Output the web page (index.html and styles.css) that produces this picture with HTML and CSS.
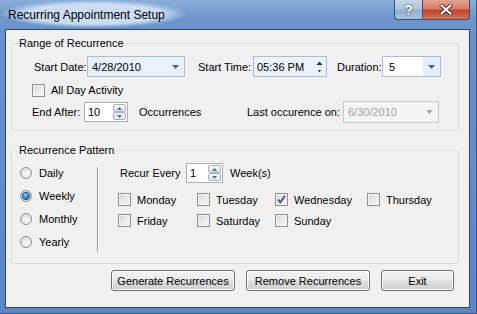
FILE: index.html
```html
<!DOCTYPE html>
<html lang="en">
<head>
    <meta charset="UTF-8">
    <title>Recurring Appointment Setup</title>
    <link rel="stylesheet" href="styles.css">
</head>
<body>

    <div class="window">
        <div class="titlebar">
            <span class="title">Recurring Appointment Setup</span>
            <div class="caption-btns">
                <span class="cap-btn help">?</span>
                <span class="cap-btn close">
                    <svg width="14" height="11" viewBox="0 0 14 11">
                        <path d="M2.5 1.5 L11.5 9.5 M11.5 1.5 L2.5 9.5" stroke="#5a2a22" stroke-width="4" stroke-linecap="round"/>
                        <path d="M2.5 1.5 L11.5 9.5 M11.5 1.5 L2.5 9.5" stroke="#fff" stroke-width="2.2" stroke-linecap="round"/>
                    </svg>
                </span>
            </div>
        </div>

        <div class="client">
            <fieldset class="group range">
                <legend>Range of Recurrence</legend>
                <div class="group-body range-body">
                    <div class="row row-start">
                        <span class="lbl lbl-date">Start Date:</span>
                        <div class="combo combo-date">
                            <span class="val">4/28/2010</span>
                            <span class="drop">
                                <svg width="7" height="4" viewBox="0 0 7 4"><path d="M0 0 H7 L3.5 4 Z" fill="#4d6185"/></svg>
                            </span>
                        </div>
                        <span class="lbl lbl-time">Start Time:</span>
                        <div class="timebox">
                            <span class="val">05:36 PM</span>
                            <span class="tspin">
                                <svg width="7" height="4" viewBox="0 0 7 4"><path d="M0.5 4 H6.5 L3.5 0.5 Z" fill="#1e2a4a"/></svg>
                                <svg width="5" height="3" viewBox="0 0 5 3"><path d="M1 0 H4 L2.5 2.5 Z" fill="#1e2a4a"/></svg>
                            </span>
                        </div>
                        <span class="lbl lbl-dur">Duration:</span>
                        <div class="combo combo-dur">
                            <span class="val">5</span>
                            <span class="drop drop-btn">
                                <svg width="7" height="4" viewBox="0 0 7 4"><path d="M0 0 H7 L3.5 4 Z" fill="#4d6185"/></svg>
                            </span>
                        </div>
                    </div>

                    <div class="row row-allday">
                        <span class="check"></span>
                        <span class="check-text">All Day Activity</span>
                    </div>

                    <div class="row row-end">
                        <span class="lbl lbl-end">End After:</span>
                        <div class="numeric num-end">
                            <span class="val">10</span>
                            <span class="spin">
                                <span class="spin-btn"><svg width="5" height="3" viewBox="0 0 5 3"><path d="M0 3 H5 L2.5 0 Z" fill="#4d6ca8"/></svg></span>
                                <span class="spin-btn"><svg width="5" height="3" viewBox="0 0 5 3"><path d="M0 0 H5 L2.5 3 Z" fill="#4d6ca8"/></svg></span>
                            </span>
                        </div>
                        <span class="lbl lbl-occ">Occurrences</span>
                        <span class="lbl lbl-last">Last occurence on:</span>
                        <div class="combo combo-off">
                            <span class="val">6/30/2010</span>
                            <span class="drop">
                                <svg width="7" height="4" viewBox="0 0 7 4"><path d="M0 0 H7 L3.5 4 Z" fill="#a8a8a8"/></svg>
                            </span>
                        </div>
                    </div>
                </div>
            </fieldset>

            <fieldset class="group pattern">
                <legend>Recurrence Pattern</legend>
                <div class="group-body pattern-body">
                    <div class="radio-col">
                        <div class="radio-row"><span class="radio"></span>Daily</div>
                        <div class="radio-row"><span class="radio on"></span>Weekly</div>
                        <div class="radio-row"><span class="radio"></span>Monthly</div>
                        <div class="radio-row"><span class="radio"></span>Yearly</div>
                    </div>
                    <div class="vsep"></div>
                    <div class="pattern-right">
                        <div class="recur-row">
                            <span class="lbl recur-lbl">Recur Every</span>
                            <div class="numeric num-recur">
                                <span class="val">1</span>
                                <span class="spin">
                                    <span class="spin-btn"><svg width="5" height="3" viewBox="0 0 5 3"><path d="M0 3 H5 L2.5 0 Z" fill="#4d6ca8"/></svg></span>
                                    <span class="spin-btn"><svg width="5" height="3" viewBox="0 0 5 3"><path d="M0 0 H5 L2.5 3 Z" fill="#4d6ca8"/></svg></span>
                                </span>
                            </div>
                            <span class="lbl weeks">Week(s)</span>
                        </div>
                        <div class="days-row first">
                            <div class="day d1"><span class="check"></span>Monday</div>
                            <div class="day d2"><span class="check"></span>Tuesday</div>
                            <div class="day d3">
                                <span class="check checked">
                                    <svg width="11" height="11" viewBox="0 0 11 11"><path d="M2 5.5 L4.3 8.3 L9 1.8" stroke="#4a5d8f" stroke-width="2" fill="none"/></svg>
                                </span>Wednesday
                            </div>
                            <div class="day d4"><span class="check"></span>Thursday</div>
                        </div>
                        <div class="days-row">
                            <div class="day d1"><span class="check"></span>Friday</div>
                            <div class="day d2"><span class="check"></span>Saturday</div>
                            <div class="day d3"><span class="check"></span>Sunday</div>
                        </div>
                    </div>
                </div>
            </fieldset>

            <div class="actions">
                <button class="btn btn-wide">Generate Recurrences</button>
                <button class="btn btn-wide">Remove Recurrences</button>
                <button class="btn btn-exit">Exit</button>
            </div>
        </div>
    </div>

</body>
</html>
```

FILE: styles.css
```css
body {
    margin: 0;
    background-color: #fff;
    font-family: 'Liberation Sans', Arial, sans-serif;
    font-size: 11px;
    color: #000;
}

/* window frame */
.window {
    width: 477px;
    height: 314px;
    box-sizing: border-box;
    padding: 0 6px 5px 5px;
    display: flex;
    flex-direction: column;
    background: linear-gradient(to bottom, #8aaedb 0px, #6e96cc 18px, #6690cc 40px, #5f8bca 200px, #5a86c6 100%);
    border-right: 1px solid #3d5a86;
    border-bottom: 1px solid #3d5a86;
}

.titlebar {
    height: 29px;
    display: flex;
    align-items: flex-start;
    flex: none;
}

.title {
    margin: 0 0 0 -5px;
    padding: 7px 22px 5px 8px;
    font-size: 12px;
    line-height: 16px;
    color: #000;
    background: radial-gradient(closest-side, rgba(208, 224, 244, 0.95) 72%, rgba(208, 224, 244, 0) 100%);
}

.caption-btns {
    margin-left: auto;
    display: flex;
    height: 20px;
}

.cap-btn {
    height: 20px;
    box-sizing: border-box;
    display: flex;
    justify-content: center;
    align-items: center;
    border: 1px solid #3e4f6c;
    border-top: none;
}

.help {
    width: 28px;
    border-right: none;
    border-radius: 0 0 0 4px;
    background: linear-gradient(to bottom, #c6d5e8 0%, #b0c4de 48%, #94acd0 52%, #a9c0de 100%);
    color: #fff;
    font-weight: bold;
    font-size: 14px;
    text-shadow: 0 0 2px #2c3a55, 0 0 1px #2c3a55;
}

.close {
    width: 48px;
    border-radius: 0 0 4px 0;
    background: linear-gradient(to bottom, #e4a294 0%, #d87c68 45%, #c4432b 55%, #d2745c 100%);
}

/* client area */
.client {
    flex: 1;
    box-sizing: border-box;
    border: 1px solid #33445f;
    background-color: #f0f0f0;
    padding: 7px 0 0 5px;
}

.group {
    margin: 0;
    padding: 0;
    width: 448px;
    box-sizing: border-box;
    border: 1px solid #d5dfe5;
    border-radius: 3px;
    min-width: 0;
}

.group legend {
    margin-left: 5px;
    padding: 0 2px;
    font-size: 11px;
    line-height: 13px;
}

.pattern {
    margin-top: 13px;
}

.range-body {
    padding: 6px 0 7px 20px;
}

.row {
    display: flex;
    align-items: center;
}

.row-start {
    height: 21px;
}

.row-allday {
    height: 14px;
    margin-top: 6px;
}

.row-end {
    height: 22px;
    margin-top: 4px;
}

.lbl {
    flex: none;
    white-space: nowrap;
}

.lbl-date {
    margin-left: 2px;
    width: 53px;
}

.lbl-time {
    margin-left: 13px;
    width: 55px;
}

.lbl-dur {
    margin-left: 10px;
    width: 45px;
}

.lbl-end {
    width: 52px;
}

.lbl-occ {
    margin-left: 11px;
    width: 108px;
}

.lbl-last {
    width: 96px;
}

/* combo boxes */
.combo, .timebox, .numeric {
    flex: none;
    height: 21px;
    box-sizing: border-box;
    display: flex;
    align-items: center;
}

.combo {
    border: 1px solid #a9bcd7;
    background-color: #e8f1fb;
    padding-left: 4px;
}

.combo .val, .timebox .val, .numeric .val {
    flex: 1;
}

.drop {
    width: 17px;
    height: 100%;
    display: flex;
    justify-content: center;
    align-items: center;
}

.combo-date {
    width: 98px;
}

.combo-dur {
    width: 59px;
    background-color: #fff;
    padding-left: 6px;
}

.drop-btn {
    background-color: #e4edf8;
}

.combo-off {
    width: 96px;
    height: 22px;
    background-color: #f4f4f4;
    border-color: #c2c7cc;
    color: #a2a2a2;
}

.timebox {
    width: 74px;
    border: 1px solid #a9bcd7;
    background-color: #eaf2fb;
    padding-left: 3px;
}

.tspin {
    width: 14px;
    height: 100%;
    display: flex;
    flex-direction: column;
    justify-content: space-between;
    align-items: center;
    padding: 4px 0 3px;
    box-sizing: border-box;
}

/* numeric up/down */
.numeric {
    height: 20px;
    border: 1px solid #abadb3;
    background-color: #fff;
    padding: 0 1px 0 3px;
}

.num-end {
    width: 44px;
}

.num-recur {
    width: 37px;
}

.spin {
    width: 13px;
    height: 16px;
    display: flex;
    flex-direction: column;
}

.spin-btn {
    flex: 1;
    display: flex;
    justify-content: center;
    align-items: center;
    border: 1px solid #a7b3c4;
    border-radius: 2px;
    background: linear-gradient(to bottom, #f6f8fb, #dde4ee);
}

/* checkboxes */
.check {
    flex: none;
    width: 13px;
    height: 13px;
    box-sizing: border-box;
    border: 1px solid #8e8f8f;
    background: linear-gradient(135deg, #d1d3d6 0%, #e9eaeb 50%, #f8f8f8 100%);
    box-shadow: inset 0 0 0 1px #f4f4f4;
    display: flex;
    justify-content: center;
    align-items: center;
}

.check-text {
    margin-left: 6px;
}

/* recurrence pattern */
.pattern-body {
    display: flex;
    padding: 4px 0 10px 8px;
}

.radio-col {
    width: 77px;
}

.radio-row {
    height: 23px;
    display: flex;
    align-items: center;
    gap: 7px;
}

.radio {
    width: 12px;
    height: 12px;
    box-sizing: border-box;
    border: 1px solid #8e8f8f;
    border-radius: 50%;
    background: radial-gradient(circle at 60% 60%, #f9f9f9 0%, #e4e4e4 60%, #d0d0d0 100%);
    display: flex;
    justify-content: center;
    align-items: center;
}

.radio.on::after {
    content: '';
    width: 6px;
    height: 6px;
    border-radius: 50%;
    background: radial-gradient(circle at 40% 35%, #9fd3f7 0%, #2f86cc 45%, #0d3f7a 100%);
    box-shadow: 0 0 0 1px #245188;
}

.vsep {
    margin-top: 6px;
    height: 85px;
    width: 0;
    border-left: 1px solid #a0a0a0;
    border-right: 1px solid #fff;
}

.pattern-right {
    margin-left: 19px;
}

.recur-row {
    margin-top: 2px;
    height: 20px;
    display: flex;
    align-items: center;
}

.recur-lbl {
    margin-left: 2px;
    width: 66px;
}

.weeks {
    margin-left: 7px;
}

.days-row {
    display: flex;
    height: 21px;
}

.days-row.first {
    margin-top: 6px;
}

.day {
    display: flex;
    align-items: center;
    gap: 6px;
}

.d1 { width: 79px; }
.d2 { width: 78px; }
.d3 { width: 92px; }

/* buttons */
.actions {
    display: flex;
    justify-content: flex-end;
    gap: 11px;
    margin-top: 6px;
    padding-right: 15px;
}

.btn {
    height: 21px;
    padding: 0;
    font-family: 'Liberation Sans', Arial, sans-serif;
    font-size: 11px;
    color: #000;
    border: 1px solid #707070;
    border-radius: 3px;
    background: linear-gradient(to bottom, #f2f2f2 0%, #ebebeb 48%, #dddddd 52%, #cfcfcf 100%);
    box-shadow: inset 0 0 0 1px #fbfbfb;
}

.btn-wide {
    width: 124px;
}

.btn-exit {
    width: 73px;
}
```
